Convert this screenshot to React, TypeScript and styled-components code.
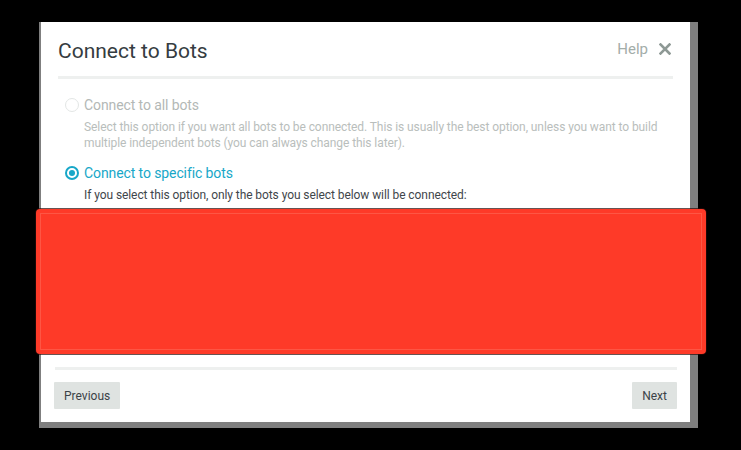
import React from "react";
import styled, { createGlobalStyle } from "styled-components";

const Global = createGlobalStyle`
  html, body { margin: 0; padding: 0; background: #000; }
  body { width: 741px; height: 450px; overflow: hidden; font-family: Roboto, "Liberation Sans", Arial, sans-serif; }
`;

const Page = styled.div`
  position: relative;
  width: 741px;
  height: 450px;
  background: #000;
  padding: 22px 0 0 39px;
  box-sizing: border-box;
`;

const Frame = styled.div`
  width: 659px;
  height: 406px;
  background: #7f7f7f;
  padding: 0 8px 6px 2px;
  box-sizing: border-box;
  display: flex;
`;

const Panel = styled.div`
  flex: 1;
  background: #fff;
  display: flex;
  flex-direction: column;
`;

const Header = styled.div`
  display: flex;
  align-items: center;
  justify-content: space-between;
  height: 54px;
  padding: 0 19px 0 17px;
  box-sizing: border-box;
`;

const Title = styled.h1`
  margin: 0;
  font-size: 21px;
  font-weight: 400;
  color: #353c41;
  padding-top: 3px;
`;

const HeaderActions = styled.div`
  display: flex;
  align-items: center;
  gap: 11px;
`;

const HelpLink = styled.span`
  font-size: 15px;
  color: #a3ada9;
`;

const CloseIcon = styled.svg`
  display: block;
`;

const Rule = styled.div<{ $l: number; $r: number }>`
  height: 3px;
  background: #eef0ef;
  margin: 0 ${(p) => p.$r}px 0 ${(p) => p.$l}px;
`;

const Body = styled.div`
  flex: 1;
  padding: 16px 24px 0 24px;
  display: flex;
  flex-direction: column;
  gap: 12px;
`;

const Option = styled.div`
  display: flex;
  flex-direction: column;
`;

const OptionLabel = styled.label<{ $active?: boolean }>`
  display: flex;
  align-items: center;
  gap: 5px;
  font-size: 14px;
  line-height: 20px;
  letter-spacing: -0.1px;
  color: ${(p) => (p.$active ? "#17a7c8" : "#b3b8b6")};
`;

const Radio = styled.span<{ $checked?: boolean }>`
  width: 14px;
  height: 14px;
  border-radius: 50%;
  box-sizing: border-box;
  border: ${(p) => (p.$checked ? "2px solid #17a7c8" : "1px solid #e3e6e5")};
  display: flex;
  align-items: center;
  justify-content: center;
  &::after {
    content: "";
    width: 6px;
    height: 6px;
    border-radius: 50%;
    background: ${(p) => (p.$checked ? "#17a7c8" : "transparent")};
  }
`;

const Desc = styled.p<{ $muted?: boolean }>`
  margin: 4px 0 0 19px;
  font-size: 12px;
  line-height: 16px;
  letter-spacing: -0.08px;
  color: ${(p) => (p.$muted ? "#b9bebc" : "#3f464b")};
`;

const Footer = styled.div`
  display: flex;
  justify-content: space-between;
  padding: 12px 13px 13px 13px;
`;

const Button = styled.button`
  height: 27px;
  padding: 0 10px;
  border: none;
  border-radius: 1px;
  background: #dfe3e1;
  color: #3b4247;
  font-family: Roboto, "Liberation Sans", Arial, sans-serif;
  font-size: 12px;
`;

const Redaction = styled.div`
  position: absolute;
  left: 36px;
  top: 209px;
  width: 670px;
  height: 145px;
  background: #fe3a28;
  border-radius: 4px;
  box-shadow: 0 0 0 1px rgba(40, 10, 8, 0.7);
  &::after {
    content: "";
    position: absolute;
    inset: 4px;
    border: 1px solid rgba(255, 140, 120, 0.35);
  }
`;

export default function App() {
  return (
    <Page>
      <Global />
      <Frame>
        <Panel>
          <Header>
            <Title>Connect to Bots</Title>
            <HeaderActions>
              <HelpLink>Help</HelpLink>
              <CloseIcon width="12" height="12" viewBox="0 0 12 12">
                <path d="M1.5 1.5 L10.5 10.5 M10.5 1.5 L1.5 10.5" stroke="#8e9995" strokeWidth="2.6" strokeLinecap="square" />
              </CloseIcon>
            </HeaderActions>
          </Header>
          <Rule $l={17} $r={17} />
          <Body>
            <Option>
              <OptionLabel>
                <Radio />
                Connect to all bots
              </OptionLabel>
              <Desc $muted>
                Select this option if you want all bots to be connected. This is usually the best option, unless you want to build multiple independent bots (you can always change this later).
              </Desc>
            </Option>
            <Option>
              <OptionLabel $active>
                <Radio $checked />
                Connect to specific bots
              </OptionLabel>
              <Desc>If you select this option, only the bots you select below will be connected:</Desc>
            </Option>
          </Body>
          <Rule $l={14} $r={13} />
          <Footer>
            <Button>Previous</Button>
            <Button>Next</Button>
          </Footer>
        </Panel>
      </Frame>
      <Redaction />
    </Page>
  );
}
